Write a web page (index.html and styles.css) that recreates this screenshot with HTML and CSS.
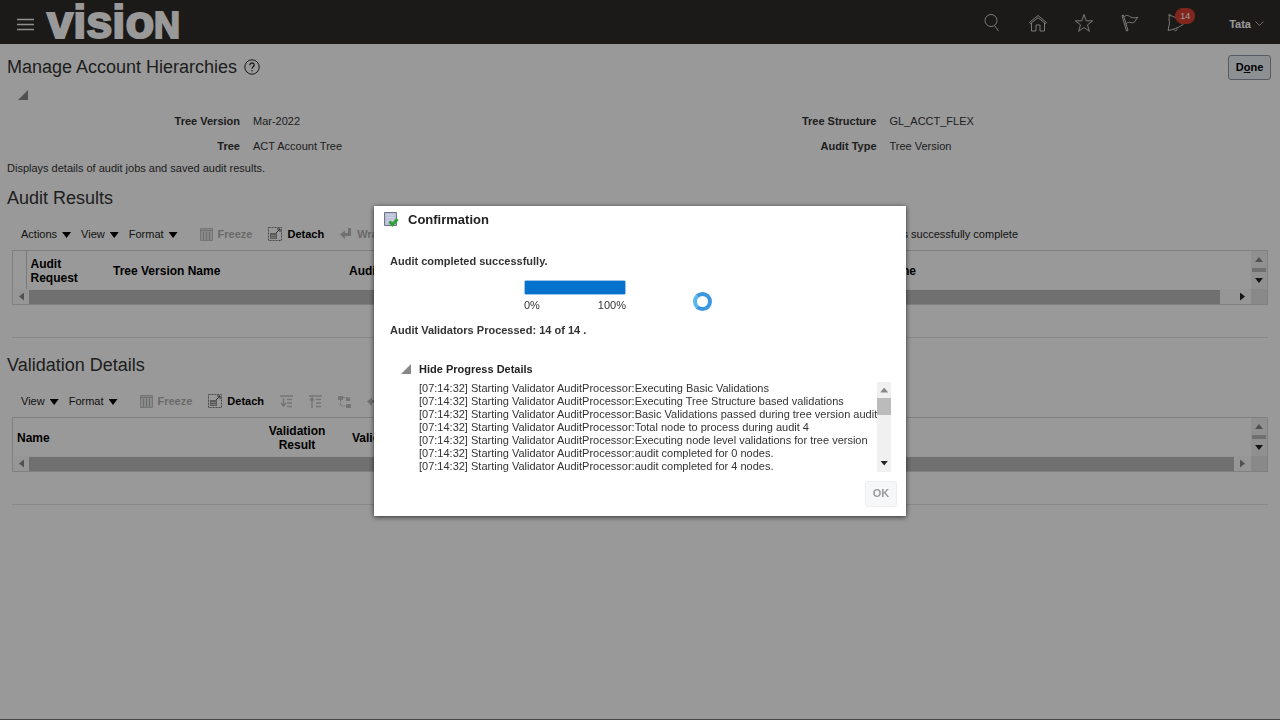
FILE: index.html
```html
<!DOCTYPE html>
<html lang="en">
  <head>
    <meta charset="UTF-8" />
    <meta name="viewport" content="width=device-width, initial-scale=1.0" />
    <title>Manage Account Hierarchies</title>
    <link rel="stylesheet" href="styles.css">
  </head>
  <body>
    <!-- Icons used more than once -->
    <svg class="defs" aria-hidden="true">
      <symbol id="i-freeze" viewBox="0 0 13 13">
        <path d="M0.5 0.5h12v12h-12z" fill="#e4e4e4" stroke="#c4c4c4" />
        <path d="M0.5 2.500h12M3.500 4v8M6.500 4v8M9.500 4v8" fill="none" stroke="#b8b8b8" />
      </symbol>
      <symbol id="i-detach" viewBox="0 0 14 14">
        <path d="M0.5 0.5h13v13h-13z" fill="none" stroke="#777" stroke-dasharray="2 1" />
        <path d="M2 6h7v6h-7z" fill="#999" />
        <path d="M3 8.500h5M3 10.500h5" stroke="#ccc" />
        <path d="M8 6l4-4M9 2h3v3" fill="none" stroke="#555" />
      </symbol>
    </svg>

    <header>
      <button class="menu-btn" aria-label="Navigator">
        <svg width="17" height="13" viewBox="0 0 17 13"><path d="M0 1.500h17M0 6.500h17M0 11.500h17" stroke="#eee" stroke-width="1.500" /></svg>
      </button>
      <a href="#" class="logo">visio<span class="logo-n">N</span></a>
      <nav>
        <a href="#" aria-label="Search"><svg viewBox="0 0 20 20"><circle cx="9" cy="7.500" r="6" /><path d="M12.500 12.500l4 5.500" /></svg></a>
        <a href="#" aria-label="Home"><svg viewBox="0 0 20 20"><path d="M1.500 9.500L10 2.500l8.500 7-1 1.200L10 4.700l-7.500 6zM3.500 10v8h4.500v-6h4v6h4.500v-8" /></svg></a>
        <a href="#" aria-label="Favorites"><svg viewBox="0 0 20 20"><path d="M10 1.500l2.200 6.300 6.500.1-5.200 4 1.900 6.400L10 14.500l-5.400 3.800 1.900-6.400-5.200-4 6.500-.1z" /></svg></a>
        <a href="#" aria-label="Watchlist"><svg viewBox="0 0 20 20"><path d="M2 2.700l1.400-.6L8 17.500l-1.500.5zM3.800 4c2.500-2.500 4.500-1.500 6.500-.2 2.500 1.500 4.500 1.200 7.700.4-1.300 1.300-2 2.500-3 4.300-1.500 2-3.500 1.200-5.500.8-1.500-.2-2.500.5-3.700 2" /></svg></a>
        <a href="#" class="bell" aria-label="Notifications"><svg viewBox="0 0 20 20"><path d="M3.500 2.500c-1.500 4 1.200 7-.8 11.500l-.5 3.500c5-1 10-2.500 15-6M3.500 2.500C8 3 12 6 17 11.500M4.500 2.500c-.2-1.800-2-1.500-2 0M8 16.500c1 2 3 1.500 3-.8" /></svg><span class="badge">14</span></a>
      </nav>
      <button class="user">Tata <svg width="9" height="6" viewBox="0 0 9 6"><path d="M.5.500l4 4 4-4" fill="none" stroke="#bbb" /></svg></button>
    </header>

    <main>
      <div class="page-title">
        <h1>Manage Account Hierarchies</h1>
        <a href="#" aria-label="Help"><svg width="16" height="16" viewBox="0 0 16 16"><circle cx="8" cy="8" r="7.200" fill="none" stroke="#222" /><path d="M5.800 6.300c0-3.200 4.600-3 4.400-.2-.1 1.600-2.200 1.700-2.200 3.700M8 11v1.300" fill="none" stroke="#222" stroke-width="1.200" /></svg></a>
        <button class="btn done">D<u>o</u>ne</button>
      </div>
      <button class="disclose" aria-label="Collapse summary"></button>

      <div class="summary">
        <dl>
          <dt>Tree Version</dt><dd>Mar-2022</dd>
          <dt>Tree</dt><dd>ACT Account Tree</dd>
        </dl>
        <dl>
          <dt>Tree Structure</dt><dd>GL_ACCT_FLEX</dd>
          <dt>Audit Type</dt><dd>Tree Version</dd>
        </dl>
      </div>
      <p class="hint">Displays details of audit jobs and saved audit results.</p>

      <section>
        <h2>Audit Results</h2>
        <div class="toolbar">
          <button class="menu">Actions</button>
          <button class="menu">View</button>
          <button class="menu">Format</button>
          <button class="tool first" disabled><svg width="13" height="13"><use href="#i-freeze" /></svg>Freeze</button>
          <button class="tool"><svg width="14" height="14"><use href="#i-detach" /></svg>Detach</button>
          <button class="tool" disabled><svg width="12" height="12" viewBox="0 0 12 12"><path d="M8 0h3v8H5v3L0 6.500 5 2.500V5h3z" fill="#bbb" /></svg>Wrap</button>
          <span class="status">Process is successfully complete</span>
        </div>
        <div class="grid">
          <div class="grid-head">
            <table class="results">
              <thead>
                <tr>
                  <th class="c-mark"></th>
                  <th class="c-request">Audit Request</th>
                  <th class="c-version">Tree Version Name</th>
                  <th class="c-status">Audit</th>
                  <th class="c-name">Tree Name</th>
                  <th></th>
                </tr>
              </thead>
            </table>
            <div class="vscroll"><i class="up"></i><b></b><i class="down"></i></div>
          </div>
          <div class="hscroll"><i class="left"></i><b></b><i class="right wide"></i><span class="corner"></span></div>
        </div>
      </section>
      <hr>

      <section>
        <h2>Validation Details</h2>
        <div class="toolbar">
          <button class="menu">View</button>
          <button class="menu">Format</button>
          <button class="tool first" disabled><svg width="13" height="13"><use href="#i-freeze" /></svg>Freeze</button>
          <button class="tool"><svg width="14" height="14"><use href="#i-detach" /></svg>Detach</button>
          <button class="tool" aria-label="Expand all below" disabled><svg width="13" height="13" viewBox="0 0 13 13"><path d="M0 1h13M7 4.500h5M7 8h5M7 11.500h5M3.500 3v8M1 8l2.500 3L6 8" fill="none" stroke="#c4c4c4" stroke-width="1.500" /></svg></button>
          <button class="tool" aria-label="Collapse all below" disabled><svg width="13" height="13" viewBox="0 0 13 13"><path d="M0 1h13M7 4.500h5M7 8h5M7 11.500h5M3 3v10M1 5.500L3 3l2 2.500" fill="none" stroke="#c4c4c4" stroke-width="1.500" /></svg></button>
          <button class="tool" aria-label="Show hierarchy" disabled><svg width="13" height="13" viewBox="0 0 13 13"><path d="M0 1h5v4H0zM8 3h4v3H8zM8 9h5v4H8z" fill="#c4c4c4" /><path d="M2.500 5v6H7M5 2.500h7" fill="none" stroke="#c4c4c4" stroke-dasharray="2 1" /></svg></button>
          <button class="tool" aria-label="Wrap" disabled><svg width="12" height="12" viewBox="0 0 12 12"><path d="M8 0h3v8H5v3L0 6.500 5 2.500V5h3z" fill="#bbb" /></svg></button>
        </div>
        <div class="grid">
          <div class="grid-head">
            <table class="details">
              <thead>
                <tr>
                  <th class="c-title">Name</th>
                  <th class="c-result">Validation Result</th>
                  <th>Validation</th>
                </tr>
              </thead>
            </table>
            <div class="vscroll"><i class="up"></i><b></b><i class="down"></i></div>
          </div>
          <div class="hscroll"><i class="left"></i><b></b><i class="right off"></i><span class="corner"></span></div>
        </div>
      </section>
      <hr>
    </main>

    <div class="overlay">
      <div class="dialog" role="dialog" aria-labelledby="dlg-title">
        <div class="dialog-title">
          <svg width="15" height="15" viewBox="0 0 15 15">
            <path d="M.5.500h12v13H.5z" fill="#b9bfd2" stroke="#6e7488" />
            <path d="M2.500 3h8M2.500 5.500h8M2.500 8h8M2.500 10.500h4" stroke="#d4d8e6" />
            <path d="M5.500 9.500l3 3.200 5-5.700" fill="none" stroke="#2da13a" stroke-width="3" />
          </svg>
          <h3 id="dlg-title">Confirmation</h3>
        </div>
        <div class="dialog-body">
          <p>Audit completed successfully.</p>
          <div class="progress">
            <progress value="100" max="100" aria-label="Audit progress"></progress>
            <div class="scale"><span>0%</span><span>100%</span></div>
          </div>
          <p>Audit Validators Processed: 14 of 14 .</p>
          <button class="details-toggle"><span class="tri"></span>Hide Progress Details</button>
          <div class="log">
            <ul>
              <li>[07:14:32] Starting Validator AuditProcessor:Executing Basic Validations</li>
              <li>[07:14:32] Starting Validator AuditProcessor:Executing Tree Structure based validations</li>
              <li>[07:14:32] Starting Validator AuditProcessor:Basic Validations passed during tree version audit</li>
              <li>[07:14:32] Starting Validator AuditProcessor:Total node to process during audit 4</li>
              <li>[07:14:32] Starting Validator AuditProcessor:Executing node level validations for tree version</li>
              <li>[07:14:32] Starting Validator AuditProcessor:audit completed for 0 nodes.</li>
              <li>[07:14:32] Starting Validator AuditProcessor:audit completed for 4 nodes.</li>
            </ul>
            <div class="vscroll"><i class="up"></i><b></b><i class="down"></i></div>
          </div>
        </div>
        <div class="dialog-footer"><button class="btn ok" disabled>OK</button></div>
        <span class="busy"></span>
      </div>
    </div>
  </body>
</html>
```
FILE: styles.css
```css
* {
  box-sizing: border-box;
}

body {
  margin: 0;
  min-height: 100vh;
  background-color: #fff;
  color: #333;
  font-family: "Liberation Sans", Arial, sans-serif;
  font-size: 11px;
  line-height: 13px;
}

h1, h2, h3, p, ul, dl, dd {
  margin: 0;
  padding: 0;
}

button {
  padding: 0;
  border: none;
  background: none;
  color: inherit;
  font: inherit;
  cursor: pointer;
}

a {
  color: inherit;
  text-decoration: none;
}

hr {
  margin: 0 12px;
  border: none;
  border-top: 1px solid #e4e4e4;
}

.defs {
  display: none;
}

/* Top bar */
header {
  display: flex;
  align-items: center;
  height: 44px;
  padding: 0 16px 0 17px;
  background-color: #2f2c29;
  color: #fff;
}

.menu-btn {
  display: flex;
  padding-top: 4px;
}

.logo {
  margin-left: 13px;
  padding-top: 4px;
  font-size: 47px;
  font-weight: bold;
  line-height: 44px;
  -webkit-text-stroke: 2px #fff;
}

.logo-n {
  font-size: 36px;
}

nav {
  display: flex;
  gap: 26px;
  margin-left: auto;
  padding-top: 2px;
}

nav a {
  display: flex;
  position: relative;
}

nav svg {
  width: 20px;
  height: 20px;
  fill: none;
  stroke: #ccc;
}

.badge {
  position: absolute;
  top: -5px;
  left: 9px;
  width: 20px;
  border-radius: 8px;
  background-color: #d8402f;
  font-size: 9px;
  line-height: 16px;
  text-align: center;
}

.user {
  display: flex;
  align-items: center;
  gap: 4px;
  margin-left: 43px;
  padding-top: 4px;
  font-weight: bold;
}

/* Page */
.page-title {
  display: flex;
  align-items: center;
  height: 46px;
  padding: 0 9px 0 7px;
}

h1, h2 {
  font-size: 18px;
  font-weight: normal;
  line-height: 20px;
}

.page-title a {
  display: flex;
  margin-left: 7px;
}

.btn {
  border: 1px solid #c4ccd2;
  border-radius: 3px;
  font-weight: bold;
}

.done {
  width: 43px;
  height: 25px;
  margin-left: auto;
  border-color: #8f99a3;
  background-color: #eaf0f5;
  color: #000;
}

.disclose,
.tri {
  display: block;
  width: 10px;
  height: 10px;
  background-color: #888;
  clip-path: polygon(100% 0, 100% 100%, 0 100%);
}

.disclose {
  margin-left: 18px;
}

.summary {
  display: grid;
  grid-template-columns: 1fr 1fr;
  padding: 9px 0 0 7px;
}

dl {
  display: grid;
  grid-template-columns: 233px 1fr;
  column-gap: 13px;
  line-height: 25px;
}

dt {
  font-weight: bold;
  text-align: right;
}

.hint {
  padding: 3px 7px 0;
}

section {
  padding: 13px 12px 32px;
}

hr + section {
  padding-top: 17px;
}

h2 {
  margin-left: -5px;
}

.toolbar {
  display: flex;
  align-items: center;
  height: 32px;
  margin-top: 10px;
  padding-left: 9px;
  color: #222;
}

.menu {
  display: flex;
  align-items: center;
  gap: 5px;
  margin-right: 10px;
}

.menu::after {
  content: "";
  width: 9px;
  height: 6px;
  margin-top: 2px;
  background-color: #000;
  clip-path: polygon(0 0, 100% 0, 50% 100%);
}

.tool {
  display: flex;
  align-items: center;
  gap: 5px;
  margin-right: 16px;
  color: #000;
  font-weight: bold;
}

.tool.first {
  margin-left: 12px;
}

.tool:disabled {
  color: #b0b0b0;
}

.status {
  margin-left: auto;
  margin-right: 250px;
}

/* Tables */
.grid {
  border: 1px solid #d6d6d6;
}

.grid-head {
  display: flex;
  height: 38px;
}

table {
  flex: 1;
  border-collapse: collapse;
  table-layout: fixed;
}

th {
  padding: 2px 4px 0;
  color: #000;
  font-size: 12px;
  line-height: 14px;
  text-align: left;
}

.c-mark {
  width: 13px;
  border-right: 1px solid #ccc;
}

.c-request {
  width: 83px;
}

.c-version {
  width: 236px;
}

.c-status {
  width: 400px;
}

.c-name {
  width: 175px;
  text-align: right;
}

.c-title {
  width: 240px;
}

.c-result {
  width: 88px;
  text-align: center;
}

.details th:last-child {
  padding-left: 11px;
}

/* Scroll bars */
.vscroll {
  display: flex;
  flex-direction: column;
  align-items: center;
  justify-content: space-between;
  width: 16px;
  padding: 6px 0;
  background-color: #f0f0f0;
}

.vscroll b {
  width: 14px;
  height: 4px;
  background-color: #bbb;
}

.up, .down {
  width: 8px;
  height: 5px;
  background-color: #888;
  clip-path: polygon(50% 0, 100% 100%, 0 100%);
}

.down {
  background-color: #222;
  clip-path: polygon(0 0, 100% 0, 50% 100%);
}

.hscroll {
  display: flex;
  align-items: center;
  height: 15px;
  background-color: #fafafa;
}

.hscroll b {
  flex: 1;
  height: 14px;
  background-color: #bbb;
}

.left, .right {
  width: 5px;
  height: 8px;
  margin: 0 5px 0 6px;
  background-color: #888;
  clip-path: polygon(0 50%, 100% 0, 100% 100%);
}

.right {
  margin: 0 6px;
  background-color: #222;
  clip-path: polygon(0 0, 100% 50%, 0 100%);
}

.right.wide {
  margin-left: 20px;
}

.right.off {
  background-color: #888;
}

.corner {
  width: 16px;
  height: 15px;
  background-color: #e4e4e4;
}

/* Confirmation dialog */
.overlay {
  display: flex;
  align-items: center;
  justify-content: center;
  position: fixed;
  inset: 0;
  padding-top: 2px;
  border-bottom: 1px solid #444;
  background-color: rgba(0, 0, 0, 0.4);
}

.dialog {
  position: relative;
  width: 532px;
  background-color: #fff;
  box-shadow: 0 1px 5px rgba(0, 0, 0, 0.7);
}

.dialog-title {
  display: flex;
  align-items: center;
  gap: 9px;
  padding: 6px 10px;
}

h3 {
  color: #222;
  font-size: 13px;
  line-height: 15px;
}

.dialog-body {
  padding: 22px 16px 0;
}

.dialog-body p {
  font-weight: bold;
}

.progress {
  width: 102px;
  margin: 12px 0 12px 134px;
}

progress {
  display: block;
  width: 100%;
  height: 15px;
  border: 1px solid #9cc4ea;
  border-radius: 2px;
  appearance: none;
}

progress::-webkit-progress-bar {
  background-color: #fff;
}

progress::-webkit-progress-value {
  background-color: #0572ce;
}

.scale {
  display: flex;
  justify-content: space-between;
  margin-top: 4px;
}

.details-toggle {
  display: flex;
  align-items: center;
  gap: 8px;
  margin: 26px 0 6px 11px;
  color: #222;
  font-weight: bold;
}

.log {
  display: flex;
  justify-content: space-between;
  height: 90px;
  padding-left: 29px;
}

.log ul {
  list-style: none;
  white-space: nowrap;
}

.log .vscroll {
  flex: none;
  width: 14px;
  justify-content: flex-start;
}

.log .vscroll b {
  height: 17px;
  margin-top: 5px;
}

.log .down {
  margin-top: auto;
}

.dialog-footer {
  display: flex;
  justify-content: flex-end;
  padding: 9px;
}

.ok {
  width: 32px;
  height: 26px;
  border-color: #eee;
  background-color: #f6f7f8;
  color: #999;
}

.busy {
  position: absolute;
  top: 86px;
  left: 319px;
  width: 19px;
  height: 19px;
  border: 4px solid #3a97e0;
  border-left-color: #55b8ee;
  border-radius: 50%;
}
```
